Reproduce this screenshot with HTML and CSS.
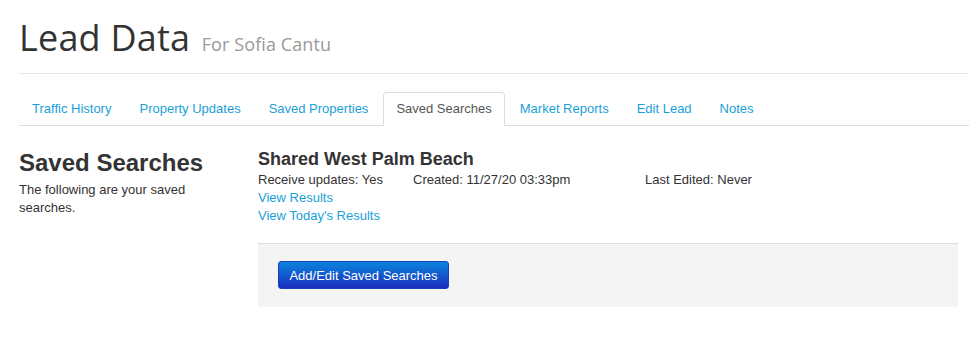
FILE: index.html
```html
<!DOCTYPE html>
<html>
<head>
<meta charset="utf-8">
<link rel="stylesheet" href="styles.css">
</head>
<body>
<div class="page">
  <header class="page-header">
    <h1 class="title">Lead Data <small class="subtitle">For Sofia Cantu</small></h1>
  </header>
  <ul class="tabs">
    <li class="tab"><a href="#">Traffic History</a></li>
    <li class="tab"><a href="#">Property Updates</a></li>
    <li class="tab"><a href="#">Saved Properties</a></li>
    <li class="tab active"><a href="#">Saved Searches</a></li>
    <li class="tab"><a href="#">Market Reports</a></li>
    <li class="tab"><a href="#">Edit Lead</a></li>
    <li class="tab"><a href="#">Notes</a></li>
  </ul>
  <div class="content">
    <aside class="side">
      <h2 class="side-title">Saved Searches</h2>
      <p class="side-text">The following are your saved searches.</p>
    </aside>
    <main class="main">
      <div class="search">
        <h3 class="search-title">Shared West Palm Beach</h3>
        <div class="meta">
          <span>Receive updates: Yes</span>
          <span>Created: 11/27/20 03:33pm</span>
          <span>Last Edited: Never</span>
        </div>
        <a class="link" href="#">View Results</a>
        <a class="link" href="#">View Today's Results</a>
      </div>
      <div class="actions">
        <button class="btn">Add/Edit Saved Searches</button>
      </div>
    </main>
  </div>
</div>
</body>
</html>
```

FILE: styles.css
```css
* { box-sizing: border-box; }
html, body { margin: 0; padding: 0; background: #fff; }
body {
  font-family: "Liberation Sans", Arial, sans-serif;
  font-size: 13px;
  color: #333;
}
.page {
  padding: 0 5px 0 19px;
  width: 974px;
}
.page-header {
  padding-top: 14px;
  padding-bottom: 11px;
  border-bottom: 1px solid #e6e6e6;
}
.title {
  margin: 0;
  font-family: "Open Sans", "Lato", sans-serif;
  font-weight: 400;
  font-size: 36px;
  line-height: 48px;
  height: 48px;
  color: #333;
  letter-spacing: 0.2px;
}
.subtitle {
  font-size: 18px;
  line-height: 1;
  color: #999;
  margin-left: 2px;
  letter-spacing: 0.1px;
}
.tabs {
  list-style: none;
  margin: 18px 0 0;
  padding: 0;
  display: flex;
  border-bottom: 1px solid #ddd;
}
.tab {
  margin-right: 2px;
  margin-bottom: -1px;
}
.tab a {
  display: block;
  padding: 8px 12px 9px;
  line-height: 15px;
  border: 1px solid transparent;
  border-radius: 4px 4px 0 0;
  color: #1a9fd8;
  text-decoration: none;
}
.tab.active a {
  color: #555;
  border-color: #ddd;
  border-bottom-color: #fff;
  background: #fff;
}
.content {
  display: flex;
  padding-top: 22px;
}
.side {
  width: 239px;
}
.side-title {
  margin: 0;
  font-size: 24px;
  line-height: 30px;
  font-weight: 700;
}
.side-text {
  margin: 3px 0 0;
  line-height: 18px;
  width: 190px;
}
.main {
  width: 700px;
}
.search-title {
  margin: 0;
  font-size: 18px;
  line-height: 22px;
  font-weight: 700;
}
.meta {
  display: grid;
  grid-template-columns: 155px 232px auto;
  line-height: 18px;
  margin-top: 1px;
}
.link {
  display: block;
  line-height: 18px;
  color: #1a9fd8;
  text-decoration: none;
}
.actions {
  margin-top: 18px;
  background: #f4f4f4;
  border-top: 1px solid #ddd;
  padding: 17px 20px 18px;
}
.btn {
  display: block;
  height: 28px;
  width: 171px;
  padding: 0;
  border: 1px solid #1a3fb8;
  border-radius: 3px;
  background: linear-gradient(#0a84dc, #1a2dbf);
  color: #fff;
  font-family: "Liberation Sans", Arial, sans-serif;
  font-size: 13px;
}
```
